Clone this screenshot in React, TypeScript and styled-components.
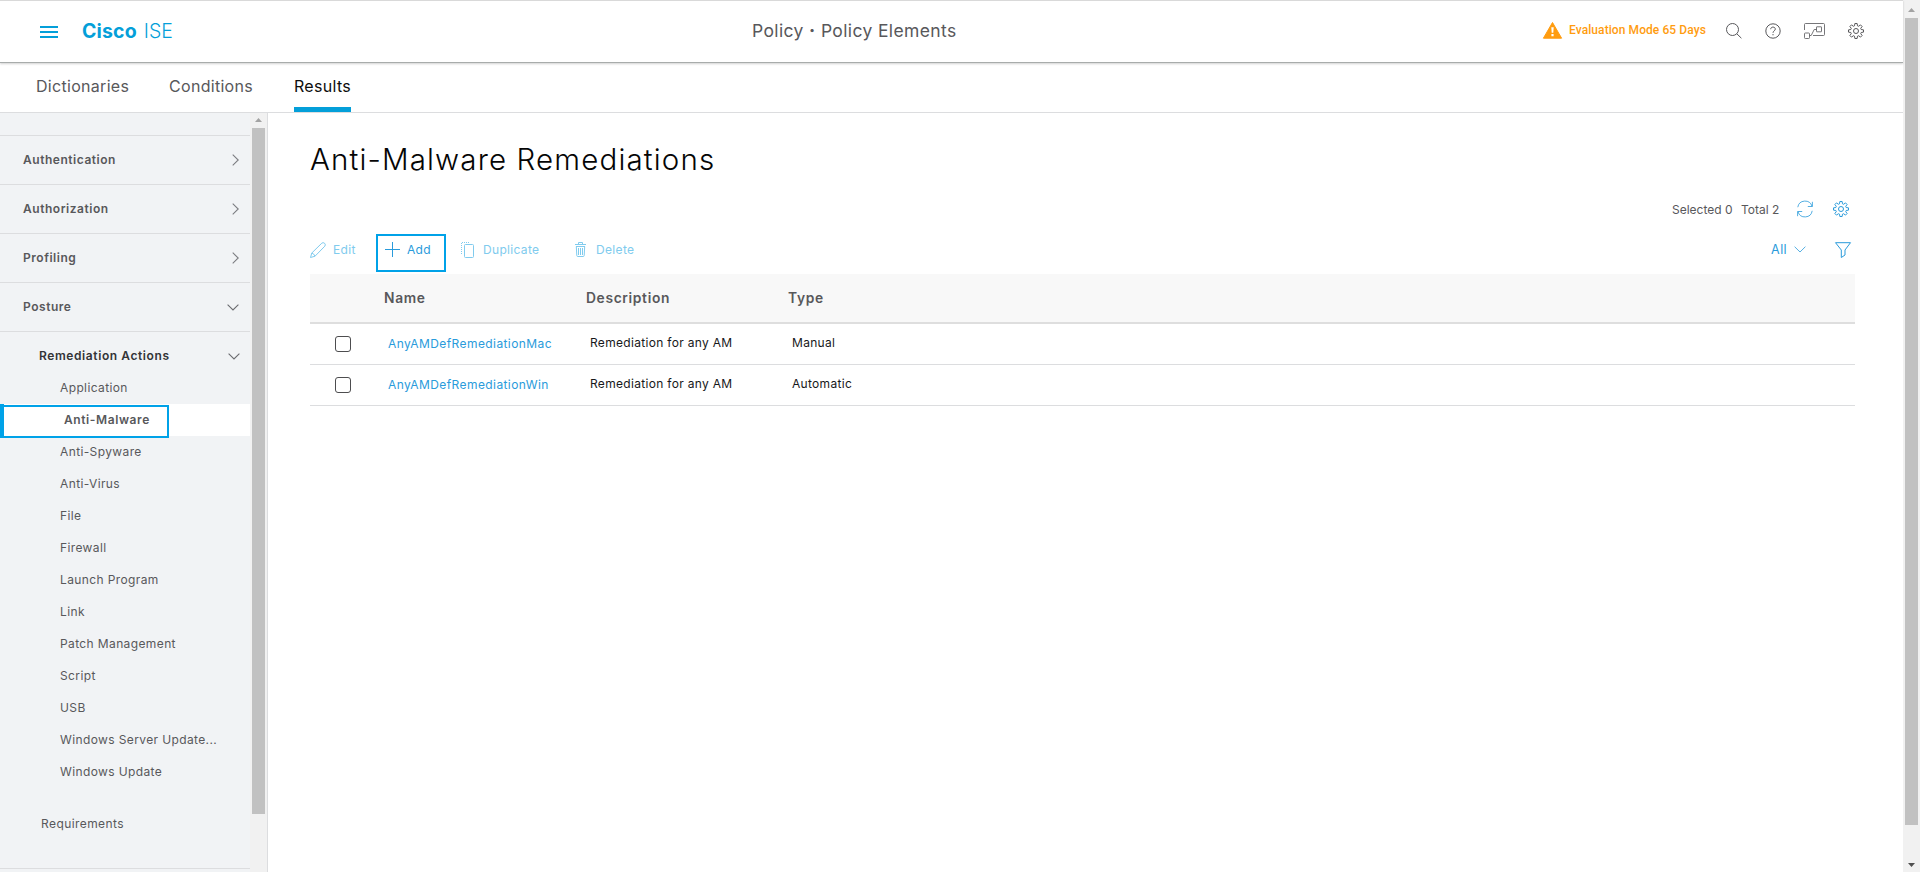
import React from "react";
import styled, { createGlobalStyle, css } from "styled-components";

const GlobalStyle = createGlobalStyle`
  *, *::before, *::after { box-sizing: border-box; }
  html, body { margin: 0; padding: 0; overflow: hidden; background: #fff; }
  body {
    font-family: Inter, "Liberation Sans", sans-serif;
    font-size: 12px;
    color: #58585b;
  }
`;

const blue = "#049fd9";
const link = "#2a9bdb";
const line = "#dcdddf";

const Shell = styled.div`
  display: flex;
  width: 1920px;
  height: 872px;
  background: #fff;
`;

const Page = styled.div`
  display: flex;
  flex-direction: column;
  width: 1903px;
  height: 872px;
`;

const Header = styled.header`
  position: relative;
  z-index: 2;
  display: flex;
  align-items: center;
  flex: none;
  height: 63px;
  padding: 0 39px 2px 40px;
  border-top: 1px solid #d9d9d9;
  border-bottom: 1px solid #a8acab;
  background: #fff;
  box-shadow: 0 1px 2px rgba(0, 0, 0, 0.18);
`;

const Burger = styled.div`
  display: flex;
  flex-direction: column;
  gap: 3px;
  width: 18px;
  margin-top: 2px;

  i {
    height: 2px;
    background: ${blue};
  }
`;

const Brand = styled.div`
  width: 120px;
  margin-left: 24px;
  font-size: 19.5px;
  line-height: 24px;
  font-weight: 300;
  color: ${blue};
  white-space: pre;

  b {
    font-weight: 700;
    letter-spacing: 0.15px;
    margin-right: 7px;
  }
`;

const PageTrail = styled.div`
  margin-left: 550px;
  width: 220px;
  font-size: 17.5px;
  line-height: 24px;
  letter-spacing: 0.37px;
  white-space: nowrap;

  b {
    font-weight: 800;
  }
`;

const HeaderTools = styled.div`
  display: flex;
  align-items: center;
  margin-left: auto;
`;

const EvalNotice = styled.div`
  display: flex;
  align-items: center;
  gap: 7px;
  width: 183px;
  font: 500 12px/16px Roboto, sans-serif;
  letter-spacing: 0.08px;
  color: #ff9c0f;
  white-space: nowrap;

  span {
    padding-bottom: 1px;
  }
`;

const Tabs = styled.nav`
  display: flex;
  flex: none;
  gap: 41px;
  height: 50px;
  padding-left: 36px;
  border-bottom: 1px solid ${line};
`;

const Tab = styled.a<{ $active?: boolean; $w: number }>`
  width: ${(p) => p.$w}px;
  height: 49px;
  padding-top: 11px;
  font-size: 16px;
  line-height: 24px;
  letter-spacing: 0.3px;
  white-space: nowrap;
  ${(p) =>
    p.$active &&
    css`
      color: #0d0d0d;
      border-bottom: 5px solid ${blue};
    `}
`;

const Body = styled.div`
  display: flex;
  flex: 1;
  min-height: 0;
`;

const Sidebar = styled.aside`
  display: flex;
  flex: none;
  width: 268px;
  height: 759px;
  border-right: 1px solid ${line};
`;

const Menu = styled.div`
  width: 250px;
  padding-top: 22px;
  background: #f1f3f5;
  overflow: hidden;
`;

const Section = styled.div`
  display: flex;
  align-items: center;
  justify-content: space-between;
  height: 49px;
  padding: 0 11px 0 23px;
  border-top: 1px solid ${line};
  font-weight: 600;
  letter-spacing: 0.53px;

  span {
    padding-bottom: 2px;
  }
`;

const SubSection = styled(Section)`
  height: 41px;
  padding: 8px 10px 0 39px;
  letter-spacing: 0.59px;
  color: #333437;
`;

const MenuItem = styled.div<{ $active?: boolean }>`
  position: relative;
  height: 32px;
  padding-left: ${(p) => (p.$active ? 64 : 60)}px;
  line-height: 32px;
  letter-spacing: 0.38px;
  white-space: nowrap;
  ${(p) =>
    p.$active &&
    css`
      background: #fff;
      font-weight: 600;
      letter-spacing: 0.6px;
      box-shadow: inset 4px 0 0 #00a2e8;
    `}
`;

const ItemFrame = styled.span`
  position: absolute;
  left: 0;
  top: 1px;
  z-index: 1;
  width: 169px;
  height: 33px;
  border: 2px solid #00a2e8;
  border-left-width: 4px;
`;

const Requirements = styled.div`
  height: 80px;
  padding: 20px 0 0 41px;
  line-height: 32px;
  letter-spacing: 0.42px;
`;

const ScrollTrack = styled.div`
  display: flex;
  flex-direction: column;
  align-items: center;
  width: 17px;
  padding: 5px 0;
  background: #f1f1f1;
`;

const ScrollThumb = styled.div<{ $h: number }>`
  width: 13px;
  height: ${(p) => p.$h}px;
  margin-top: 6px;
  background: #c1c1c1;
`;

const Arrow = styled.i<{ $down?: boolean }>`
  width: 7px;
  height: 4px;
  background: ${(p) => (p.$down ? "#505050" : "#a3a3a3")};
  clip-path: ${(p) =>
    p.$down ? "polygon(0 0, 100% 0, 50% 100%)" : "polygon(50% 0, 100% 100%, 0 100%)"};
`;

const PageTrack = styled(ScrollTrack)`
  padding-top: 8px;
`;

const Main = styled.main`
  display: flex;
  flex-direction: column;
  flex: 1;
  padding: 25px 48px 0 42px;
`;

const Title = styled.h1`
  margin: 0;
  font-size: 29.5px;
  line-height: 42px;
  font-weight: 300;
  letter-spacing: 1.15px;
  color: #050505;
`;

const Counts = styled.div`
  display: flex;
  align-items: center;
  justify-content: flex-end;
  height: 24px;
  margin-top: 17px;
  padding-right: 6px;
  white-space: nowrap;
`;

const CountLabel = styled.span<{ $w: number }>`
  width: ${(p) => p.$w}px;
`;

const Toolbar = styled.div`
  display: flex;
  align-items: center;
  height: 53px;
  padding: 4px 4px 0 0;
  color: ${link};
`;

const Tool = styled.div<{ $w: number; $gap: number; $muted?: boolean }>`
  position: relative;
  display: flex;
  align-items: center;
  gap: ${(p) => p.$gap}px;
  width: ${(p) => p.$w}px;
  letter-spacing: 0.33px;
  color: ${(p) => (p.$muted ? "#80cbee" : link)};
`;

const ToolFrame = styled.span`
  position: absolute;
  left: -9px;
  top: -8px;
  width: 70px;
  height: 38px;
  border: 2px solid #00a2e8;
`;

const Filters = styled.div`
  display: flex;
  align-items: center;
  margin-left: auto;
  font-size: 12.5px;
  letter-spacing: 0.4px;
`;

const Grid = styled.div`
  display: flex;
  flex-direction: column;
`;

const Row = styled.div`
  display: grid;
  grid-template-columns: 78px 202px 202px 1fr;
  align-items: center;
  height: 41px;
  border-bottom: 1px solid ${line};
  color: #17181a;
`;

const HeadRow = styled(Row)`
  height: 50px;
  border-bottom: 2px solid #dedede;
  background: #f8f8f8;
  font-size: 13.8px;
  font-weight: 600;
  letter-spacing: 0.65px;
  color: #58585b;

  span {
    margin-left: -4px;
    padding-bottom: 1px;
  }
`;

const Checkbox = styled.span`
  width: 16px;
  height: 16px;
  margin-left: 25px;
  border: 1px solid #4d4d4f;
  border-radius: 3px;
`;

const NameLink = styled.a`
  padding-bottom: 1px;
  color: ${link};
  letter-spacing: 0.41px;
`;

const Cell = styled.span`
  padding-bottom: 4px;
  letter-spacing: 0.31px;
`;

type IconProps = { w: number; h: number; sw?: number; color?: string; ml?: number; children: React.ReactNode };

const Svg = styled.svg<{ $ml: number }>`
  flex: none;
  display: block;
  margin-left: ${(p) => p.$ml}px;
  overflow: visible;
`;

const Icon = ({ w, h, sw = 1, color = "currentColor", ml = 0, children }: IconProps) => (
  <Svg $ml={ml} width={w} height={h} viewBox={`0 0 ${w} ${h}`} fill="none" stroke={color} strokeWidth={sw}>
    {children}
  </Svg>
);

const gearPath = (() => {
  const pts: string[] = [];
  const step = Math.PI / 4;
  const at = (r: number, a: number) => `${(8 + r * Math.sin(a)).toFixed(2)} ${(8 - r * Math.cos(a)).toFixed(2)}`;
  for (let i = 0; i < 8; i++) {
    const a = i * step;
    pts.push(at(5.4, a - 0.28), at(7.6, a - 0.15), at(7.6, a + 0.15), at(5.4, a + 0.28));
  }
  return `M${pts.join("L")}Z`;
})();

const Gear = ({ color, ml }: { color: string; ml: number }) => (
  <Icon w={16} h={16} color={color} ml={ml}>
    <path d={gearPath} strokeLinejoin="round" />
    <circle cx="8" cy="8" r="2.5" />
  </Icon>
);

const Right = () => (
  <Icon w={7} h={12} color="#7b7c80" sw={1.1}>
    <path d="M.7 .7 6.2 6 .7 11.3" />
  </Icon>
);

const Down = ({ color = "#6b6c70", ml = 0, sw = 1.1 }: { color?: string; ml?: number; sw?: number }) => (
  <Icon w={12} h={7} color={color} sw={sw} ml={ml}>
    <path d="M.6 .7 6 6 11.4 .7" />
  </Icon>
);

const sections: [string, boolean][] = [
  ["Authentication", false],
  ["Authorization", false],
  ["Profiling", false],
  ["Posture", true],
];

const actions = [
  "Application",
  "Anti-Malware",
  "Anti-Spyware",
  "Anti-Virus",
  "File",
  "Firewall",
  "Launch Program",
  "Link",
  "Patch Management",
  "Script",
  "USB",
  "Windows Server Update...",
  "Windows Update",
];

const rows = [
  { name: "AnyAMDefRemediationMac", description: "Remediation for any AM", type: "Manual" },
  { name: "AnyAMDefRemediationWin", description: "Remediation for any AM", type: "Automatic" },
];

const Spacer = styled.span`
  flex: 1;
`;

export default function App() {
  return (
    <>
      <GlobalStyle />
      <Shell>
        <Page>
          <Header>
            <Burger>
              <i />
              <i />
              <i />
            </Burger>
            <Brand>
              <b>Cisco</b>ISE
            </Brand>
            <PageTrail>
              Policy <b>·</b> Policy Elements
            </PageTrail>
            <HeaderTools>
              <EvalNotice>
                <Icon w={19} h={17} color="none">
                  <path d="M9.5 .5 18.6 16.2H.4Z" fill="#ff9c0f" stroke="#ff9c0f" strokeLinejoin="round" />
                  <path d="M8.3 5.2h2.4l-.4 5.6H8.7Z M8.4 12h2.2v2.2H8.4Z" fill="#fff" />
                </Icon>
                <span>Evaluation Mode 65 Days</span>
              </EvalNotice>
              <Icon w={16} h={16} color="#58585b">
                <circle cx="6.5" cy="6.5" r="6" />
                <path d="M10.8 10.8 15.4 15.2" />
              </Icon>
              <Icon w={16} h={16} color="#58585b" ml={23}>
                <circle cx="8" cy="8" r="7.2" />
                <path d="M5.7 6.2C5.7 3.4 10.3 3.4 10.3 6.1 10.3 7.8 8 7.9 8 9.8M8 11v1.3" />
              </Icon>
              <Icon w={21} h={16} color="#66666a" ml={23} sw={0.9}>
                <path d="M.5 7V1.5Q.5 .5 1.5 .5H19.5Q20.5 .5 20.5 1.5V11.5Q20.5 12.5 19.5 12.5H9" />
                <rect x=".5" y="10" width="5" height="5.5" rx=".8" />
                <rect x="12.5" y="3.8" width="5" height="5" rx=".3" />
                <path d="M5.5 12.5H7.2L10.2 6.5H12.5" />
              </Icon>
              <Gear color="#58585b" ml={23} />
            </HeaderTools>
          </Header>
          <Tabs>
            <Tab $w={92}>Dictionaries</Tab>
            <Tab $w={84}>Conditions</Tab>
            <Tab $w={57} $active>
              Results
            </Tab>
          </Tabs>
          <Body>
            <Sidebar>
              <Menu>
                {sections.map(([label, open]) => (
                  <Section key={label}>
                    <span>{label}</span>
                    {open ? <Down /> : <Right />}
                  </Section>
                ))}
                <SubSection>
                  <span>Remediation Actions</span>
                  <Down />
                </SubSection>
                {actions.map((a) => (
                  <MenuItem key={a} $active={a === "Anti-Malware"}>
                    {a}
                    {a === "Anti-Malware" && <ItemFrame />}
                  </MenuItem>
                ))}
                <Requirements>Requirements</Requirements>
                <Section />
              </Menu>
              <ScrollTrack>
                <Arrow />
                <ScrollThumb $h={686} />
              </ScrollTrack>
            </Sidebar>
            <Main>
              <Title>Anti-Malware Remediations</Title>
              <Counts>
                <CountLabel $w={69}>Selected 0</CountLabel>
                <CountLabel $w={56}>Total 2</CountLabel>
                <Icon w={16} h={16} color={link} sw={0.8}>
                  <path d="M.8 6.2A7.3 7.3 0 0 1 15 5.3M15.4 .8V5.5H10.8M15.2 9.8A7.3 7.3 0 0 1 1 10.7M.6 15.2V10.5H5.2" />
                </Icon>
                <Gear color={link} ml={20} />
              </Counts>
              <Toolbar>
                <Tool $w={75} $gap={7} $muted>
                  <Icon w={16} h={16}>
                    <path d="M.5 15.5 1.8 11 11.8 1.2Q13 0 14.6 1.3 16 2.8 14.8 4.2L5 14.2ZM1.8 11Q4 11.6 5 14.2" />
                  </Icon>
                  Edit
                </Tool>
                <Tool $w={76} $gap={7}>
                  <Icon w={15} h={15}>
                    <path d="M7.5 0V15M0 7.5H15" />
                  </Icon>
                  Add
                  <ToolFrame />
                </Tool>
                <Tool $w={114} $gap={9} $muted>
                  <Icon w={13} h={16}>
                    <rect x="3.5" y="2.5" width="9" height="13" rx="1" />
                    <path d="M.5 1V13M1 .5H9" strokeDasharray="1 1" />
                  </Icon>
                  Duplicate
                </Tool>
                <Tool $w={70} $gap={10} $muted>
                  <Icon w={11} h={15}>
                    <path d="M0 2.5H11M3.5 2.5V.5H7.5V2.5M1 4.5H10M1.3 4.5 1.8 13.5Q1.9 14.5 2.8 14.5H8.2Q9.1 14.5 9.2 13.5L9.7 4.5M3.5 6V13M5.5 6V13M7.5 6V13" />
                  </Icon>
                  Delete
                </Tool>
                <Filters>
                  All
                  <Down color={link} ml={7} sw={0.8} />
                  <Icon w={16} h={16} ml={29}>
                    <path d="M.5 .7H15.5L10 8V13L6.3 15.5V8Z" />
                  </Icon>
                </Filters>
              </Toolbar>
              <Grid>
                <HeadRow>
                  <i />
                  <span>Name</span>
                  <span>Description</span>
                  <span>Type</span>
                </HeadRow>
                {rows.map((r) => (
                  <Row key={r.name}>
                    <Checkbox />
                    <NameLink>{r.name}</NameLink>
                    <Cell>{r.description}</Cell>
                    <Cell>{r.type}</Cell>
                  </Row>
                ))}
              </Grid>
            </Main>
          </Body>
        </Page>
        <PageTrack>
          <Arrow />
          <ScrollThumb $h={807} />
          <Spacer />
          <Arrow $down />
        </PageTrack>
      </Shell>
    </>
  );
}
